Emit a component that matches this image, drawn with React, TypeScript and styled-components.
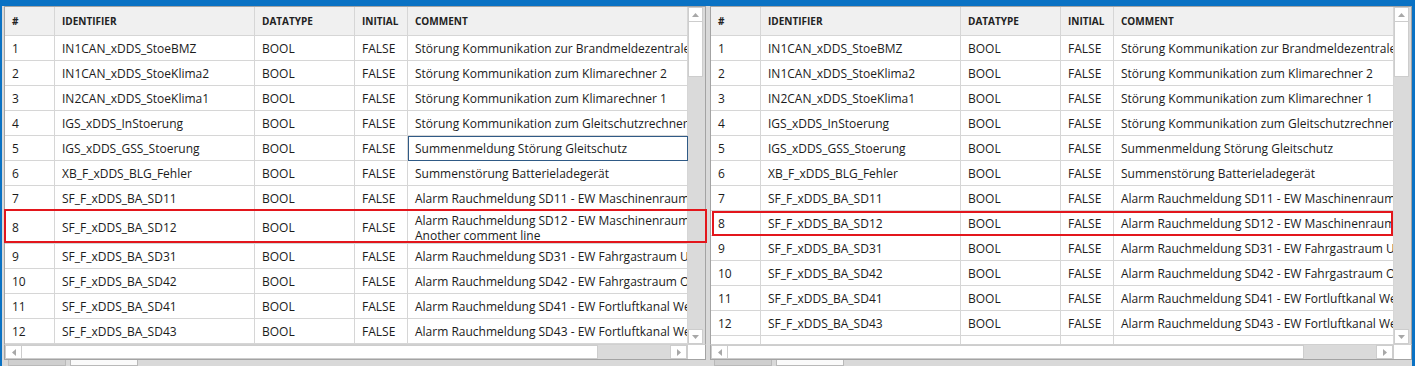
import styled, { createGlobalStyle } from "styled-components";

const GlobalStyle = createGlobalStyle`
  html, body {
    margin: 0;
    padding: 0;
    background: #d9d9d9;
  }
  body {
    font-family: "Open Sans", "Noto Sans", sans-serif;
    color: #1b1b1b;
  }
`;

interface IVar {
  name: string;
  comment: string;
}

const vars: IVar[] = [
  { name: "IN1CAN_xDDS_StoeBMZ", comment: "Störung Kommunikation zur Brandmeldezentrale" },
  { name: "IN1CAN_xDDS_StoeKlima2", comment: "Störung Kommunikation zum Klimarechner 2" },
  { name: "IN2CAN_xDDS_StoeKlima1", comment: "Störung Kommunikation zum Klimarechner 1" },
  { name: "IGS_xDDS_InStoerung", comment: "Störung Kommunikation zum Gleitschutzrechner" },
  { name: "IGS_xDDS_GSS_Stoerung", comment: "Summenmeldung Störung Gleitschutz" },
  { name: "XB_F_xDDS_BLG_Fehler", comment: "Summenstörung Batterieladegerät" },
  { name: "SF_F_xDDS_BA_SD11", comment: "Alarm Rauchmeldung SD11 - EW Maschinenraum" },
  { name: "SF_F_xDDS_BA_SD12", comment: "Alarm Rauchmeldung SD12 - EW Maschinenraum" },
  { name: "SF_F_xDDS_BA_SD31", comment: "Alarm Rauchmeldung SD31 - EW Fahrgastraum Unten" },
  { name: "SF_F_xDDS_BA_SD42", comment: "Alarm Rauchmeldung SD42 - EW Fahrgastraum Oben" },
  { name: "SF_F_xDDS_BA_SD41", comment: "Alarm Rauchmeldung SD41 - EW Fortluftkanal West" },
  { name: "SF_F_xDDS_BA_SD43", comment: "Alarm Rauchmeldung SD43 - EW Fortluftkanal West" },
];

const COLS = "50px 200px 100px 53px 280px";

const Frame = styled.div`
  width: 1415px;
  height: 366px;
  box-sizing: border-box;
  padding: 6px 3px 0 2px;
  background: #0a72c4;
  display: flex;
  overflow: hidden;
`;
const Workspace = styled.div`
  flex: 1;
  display: flex;
  gap: 4px;
  padding-left: 2px;
  background: #d9d9d9;
`;
const Pane = styled.div`
  width: 702px;
  display: flex;
  flex-direction: column;
`;
const Body = styled.div`
  position: relative;
  height: 338px;
  box-sizing: border-box;
  display: flex;
  border: 1px solid #a3a3a3;
  border-bottom: none;
  background: #fff;
`;
const Table = styled.div`
  width: 683px;
  display: flex;
  flex-direction: column;
  overflow: hidden;
`;
const Row = styled.div<{ $h: number }>`
  display: grid;
  grid-template-columns: ${COLS};
  height: ${(p) => p.$h}px;
  flex-shrink: 0;
`;
const HeadRow = styled(Row)`
  background: #f0f0f0;
`;
const Filler = styled.div`
  display: grid;
  grid-template-columns: ${COLS};
  flex: 1;
`;
const Cell = styled.div<{ $focus?: boolean }>`
  box-sizing: border-box;
  display: flex;
  align-items: center;
  padding: 0 6px 0 7px;
  border-right: 1px solid #d6d6d6;
  border-bottom: 1px solid #d6d6d6;
  font-size: 12px;
  white-space: nowrap;
  overflow: hidden;
  outline: ${(p) => (p.$focus ? "1px solid #2f5a86" : "none")};
  outline-offset: -1px;
`;
const HeadCell = styled(Cell)`
  font-size: 10px;
  font-weight: 700;
  color: #222;
`;
const MultiCell = styled(Cell)`
  flex-direction: column;
  align-items: flex-start;
  justify-content: center;
  line-height: 15px;
  padding-top: 1px;
`;
const EmptyCell = styled.div`
  border-right: 1px solid #d6d6d6;
`;
const Highlight = styled.div<{ $top: number; $left: number; $w: number; $h: number }>`
  position: absolute;
  top: ${(p) => p.$top}px;
  left: ${(p) => p.$left}px;
  width: ${(p) => p.$w}px;
  height: ${(p) => p.$h}px;
  box-sizing: border-box;
  border: 2px solid #e3161c;
  pointer-events: none;
`;

const VScroll = styled.div`
  width: 17px;
  box-sizing: border-box;
  padding-right: 2px;
  display: flex;
  flex-direction: column;
  background: #dadada;
`;
const ArrowBtn = styled.div`
  width: 15px;
  height: 15px;
  flex-shrink: 0;
  box-sizing: border-box;
  border: 1px solid #cdcdcd;
  background: #fff;
  display: flex;
  align-items: center;
  justify-content: center;
`;
const VThumb = styled.div<{ $h: number }>`
  height: ${(p) => p.$h}px;
  box-sizing: border-box;
  border: 1px solid #cdcdcd;
  border-top: none;
  background: #fff;
`;
const VTrack = styled.div`
  flex: 1;
`;

const HScroll = styled.div`
  height: 16px;
  box-sizing: border-box;
  display: flex;
  border: 1px solid #a3a3a3;
  border-top: 1px solid #d0d0d0;
  background: #dadada;
`;
const HBtn = styled.div<{ $w: number }>`
  width: ${(p) => p.$w}px;
  flex-shrink: 0;
  box-sizing: border-box;
  border: 1px solid #cdcdcd;
  background: #fff;
  display: flex;
  align-items: center;
  justify-content: center;
`;
const HThumb = styled.div<{ $w: number }>`
  width: ${(p) => p.$w}px;
  box-sizing: border-box;
  border: 1px solid #cdcdcd;
  border-left: none;
  background: #fff;
`;
const HTrack = styled.div`
  flex: 1;
`;
const Corner = styled.div`
  width: 17px;
  background: #fff;
  border-left: 1px solid #cdcdcd;
`;

const TabStrip = styled.div`
  height: 6px;
  display: flex;
  gap: 4px;
  padding-left: 4px;
  background: #d9d9d9;
`;
const Tab = styled.div<{ $active?: boolean; $w: number }>`
  width: ${(p) => p.$w}px;
  box-sizing: border-box;
  border: 1px solid #b9b9b9;
  border-top: none;
  background: ${(p) => (p.$active ? "#fafafa" : "#cfcfcf")};
`;

type Dir = "up" | "down" | "left" | "right";
const triangle: Record<Dir, string> = {
  up: "M0 4 L3.5 0 L7 4 Z",
  down: "M0 0 L7 0 L3.5 4 Z",
  left: "M4 0 L4 7 L0 3.5 Z",
  right: "M0 0 L4 3.5 L0 7 Z",
};
function Arrow({ dir }: { dir: Dir }) {
  const vertical = dir === "up" || dir === "down";
  return (
    <svg width={vertical ? 7 : 4} height={vertical ? 4 : 7} viewBox={vertical ? "0 0 7 4" : "0 0 4 7"}>
      <path d={triangle[dir]} fill="#a8a8a8" />
    </svg>
  );
}

function Grid({ tall }: { tall: boolean }) {
  return (
    <Table>
      <HeadRow $h={29}>
        <HeadCell>#</HeadCell>
        <HeadCell>IDENTIFIER</HeadCell>
        <HeadCell>DATATYPE</HeadCell>
        <HeadCell>INITIAL</HeadCell>
        <HeadCell>COMMENT</HeadCell>
      </HeadRow>
      {vars.map((v, i) => {
        const extra = tall && i === 7;
        return (
          <Row key={v.name} $h={extra ? 33 : 25}>
            <Cell>{i + 1}</Cell>
            <Cell>{v.name}</Cell>
            <Cell>BOOL</Cell>
            <Cell>FALSE</Cell>
            {extra ? (
              <MultiCell>
                <span>{v.comment}</span>
                <span>Another comment line</span>
              </MultiCell>
            ) : (
              <Cell $focus={tall && i === 4}>{v.comment}</Cell>
            )}
          </Row>
        );
      })}
      <Filler>
        <EmptyCell />
        <EmptyCell />
        <EmptyCell />
        <EmptyCell />
        <EmptyCell />
      </Filler>
    </Table>
  );
}

function Panel({ tall }: { tall: boolean }) {
  return (
    <Pane>
      <Body>
        <Grid tall={tall} />
        <VScroll>
          <ArrowBtn>
            <Arrow dir="up" />
          </ArrowBtn>
          <VThumb $h={55} />
          <VTrack />
          <ArrowBtn>
            <Arrow dir="down" />
          </ArrowBtn>
        </VScroll>
        {tall ? (
          <Highlight $top={202} $left={-1} $w={703} $h={34} />
        ) : (
          <Highlight $top={204} $left={1} $w={681} $h={25} />
        )}
      </Body>
      <HScroll>
        <HBtn $w={17}>
          <Arrow dir="left" />
        </HBtn>
        <HThumb $w={576} />
        <HTrack />
        <HBtn $w={17}>
          <Arrow dir="right" />
        </HBtn>
        <Corner />
      </HScroll>
      <TabStrip>
        <Tab $w={58} />
        <Tab $w={68} $active />
      </TabStrip>
    </Pane>
  );
}

function App() {
  return (
    <>
      <GlobalStyle />
      <Frame>
        <Workspace>
          <Panel tall={true} />
          <Panel tall={false} />
        </Workspace>
      </Frame>
    </>
  );
}
export default App;
